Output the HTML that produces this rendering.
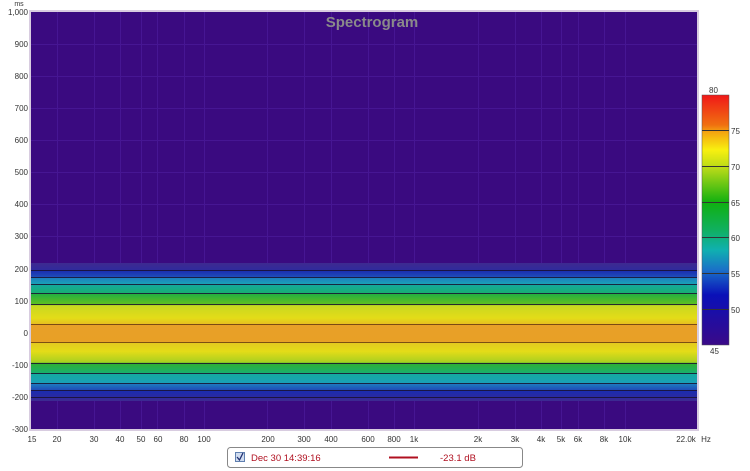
<!DOCTYPE html>
<html><head><meta charset="utf-8"><style>
html,body{margin:0;padding:0;background:#fff;width:750px;height:471px;overflow:hidden;font-family:"Liberation Sans","DejaVu Sans",sans-serif}
</style></head><body>
<svg width="750" height="471" xmlns="http://www.w3.org/2000/svg" style="position:absolute;left:0;top:0">
<defs>
<linearGradient id="band" x1="0" y1="263" x2="0" y2="401" gradientUnits="userSpaceOnUse">
<stop offset="0" stop-color="#3e2a90"/>
<stop offset="0.05" stop-color="#302a9c"/>
<stop offset="0.055" stop-color="#1a2cb0"/>
<stop offset="0.10" stop-color="#1f4cb8"/>
<stop offset="0.105" stop-color="#1e7cc0"/>
<stop offset="0.15" stop-color="#1aa0b8"/>
<stop offset="0.155" stop-color="#14a8a0"/>
<stop offset="0.22" stop-color="#18b070"/>
<stop offset="0.225" stop-color="#24b040"/>
<stop offset="0.30" stop-color="#60c020"/>
<stop offset="0.31" stop-color="#c8d820"/>
<stop offset="0.40" stop-color="#e4dc18"/>
<stop offset="0.44" stop-color="#e6c020"/>
<stop offset="0.445" stop-color="#e8a028"/>
<stop offset="0.57" stop-color="#e8a026"/>
<stop offset="0.575" stop-color="#e4c820"/>
<stop offset="0.64" stop-color="#e4dc18"/>
<stop offset="0.72" stop-color="#a8d020"/>
<stop offset="0.725" stop-color="#30b030"/>
<stop offset="0.80" stop-color="#18b070"/>
<stop offset="0.805" stop-color="#14aaa0"/>
<stop offset="0.87" stop-color="#1aa0b8"/>
<stop offset="0.875" stop-color="#1e7cc0"/>
<stop offset="0.92" stop-color="#1f4cb8"/>
<stop offset="0.925" stop-color="#1a2cb0"/>
<stop offset="0.97" stop-color="#2a2aa0"/>
<stop offset="1" stop-color="#3e2a90"/>
</linearGradient>
<linearGradient id="cb" x1="0" y1="95" x2="0" y2="345" gradientUnits="userSpaceOnUse">
<stop offset="0" stop-color="#f01818"/>
<stop offset="0.12" stop-color="#f07010"/>
<stop offset="0.145" stop-color="#f4a010"/>
<stop offset="0.22" stop-color="#f8f010"/>
<stop offset="0.30" stop-color="#b0d818"/>
<stop offset="0.43" stop-color="#10b010"/>
<stop offset="0.54" stop-color="#10b060"/>
<stop offset="0.62" stop-color="#10b0b0"/>
<stop offset="0.70" stop-color="#1a70c8"/>
<stop offset="0.80" stop-color="#0a10b8"/>
<stop offset="1" stop-color="#3a0a88"/>
</linearGradient>
</defs>
<rect x="29" y="10" width="670" height="421" fill="#d8cce0"/>
<rect x="31" y="12" width="666" height="417" fill="#3a0a80"/>
<g stroke="#4a1a98" stroke-width="1" opacity="0.8">
<line x1="31" x2="697" y1="44.5" y2="44.5"/><line x1="31" x2="697" y1="76.5" y2="76.5"/><line x1="31" x2="697" y1="108.5" y2="108.5"/><line x1="31" x2="697" y1="140.5" y2="140.5"/><line x1="31" x2="697" y1="172.5" y2="172.5"/><line x1="31" x2="697" y1="204.5" y2="204.5"/><line x1="31" x2="697" y1="236.5" y2="236.5"/><line x1="31" x2="697" y1="268.5" y2="268.5"/><line x1="31" x2="697" y1="397.5" y2="397.5"/>
<line y1="12" y2="429" x1="57.5" x2="57.5"/><line y1="12" y2="429" x1="94.5" x2="94.5"/><line y1="12" y2="429" x1="120.5" x2="120.5"/><line y1="12" y2="429" x1="141.5" x2="141.5"/><line y1="12" y2="429" x1="157.5" x2="157.5"/><line y1="12" y2="429" x1="184.5" x2="184.5"/><line y1="12" y2="429" x1="204.5" x2="204.5"/><line y1="12" y2="429" x1="267.5" x2="267.5"/><line y1="12" y2="429" x1="304.5" x2="304.5"/><line y1="12" y2="429" x1="331.5" x2="331.5"/><line y1="12" y2="429" x1="368.5" x2="368.5"/><line y1="12" y2="429" x1="394.5" x2="394.5"/><line y1="12" y2="429" x1="414.5" x2="414.5"/><line y1="12" y2="429" x1="478.5" x2="478.5"/><line y1="12" y2="429" x1="515.5" x2="515.5"/><line y1="12" y2="429" x1="541.5" x2="541.5"/><line y1="12" y2="429" x1="561.5" x2="561.5"/><line y1="12" y2="429" x1="578.5" x2="578.5"/><line y1="12" y2="429" x1="604.5" x2="604.5"/><line y1="12" y2="429" x1="625.5" x2="625.5"/>
</g>
<rect x="31" y="263" width="666" height="138" fill="url(#band)"/>
<g stroke="#1a1030" stroke-width="1" fill="none" opacity="0.85">
<line x1="31" x2="697" y1="270.5" y2="270.5"/><line x1="31" x2="697" y1="277.5" y2="277.5"/><line x1="31" x2="697" y1="284.5" y2="284.5"/><line x1="31" x2="697" y1="293.5" y2="293.5"/><line x1="31" x2="697" y1="304.5" y2="304.5"/><line x1="31" x2="697" y1="324.5" y2="324.5" stroke="#6a3a10"/><line x1="31" x2="697" y1="342.5" y2="342.5" stroke="#6a3a10"/><line x1="31" x2="697" y1="363.5" y2="363.5"/><line x1="31" x2="697" y1="373.5" y2="373.5"/><line x1="31" x2="697" y1="383.5" y2="383.5"/><line x1="31" x2="697" y1="390.5" y2="390.5"/><line x1="31" x2="697" y1="397.5" y2="397.5"/>
</g>
<text x="372" y="27" text-anchor="middle" font-size="15" font-weight="bold" fill="#8a8a8a">Spectrogram</text>
<g font-size="8" fill="#333" text-anchor="end">
<text x="19" y="6" text-anchor="middle" font-size="7">ms</text>
<text x="28" y="15">1,000</text><text x="28" y="47">900</text><text x="28" y="79">800</text><text x="28" y="111">700</text><text x="28" y="143">600</text><text x="28" y="175">500</text><text x="28" y="207">400</text><text x="28" y="239">300</text><text x="28" y="272">200</text><text x="28" y="304">100</text><text x="28" y="336">0</text><text x="28" y="368">-100</text><text x="28" y="400">-200</text><text x="28" y="432">-300</text>
</g>
<g font-size="8" fill="#333" text-anchor="middle">
<text x="32" y="442">15</text><text x="57" y="442">20</text><text x="94" y="442">30</text><text x="120" y="442">40</text><text x="141" y="442">50</text><text x="158" y="442">60</text><text x="184" y="442">80</text><text x="204" y="442">100</text><text x="268" y="442">200</text><text x="304" y="442">300</text><text x="331" y="442">400</text><text x="368" y="442">600</text><text x="394" y="442">800</text><text x="414" y="442">1k</text><text x="478" y="442">2k</text><text x="515" y="442">3k</text><text x="541" y="442">4k</text><text x="561" y="442">5k</text><text x="578" y="442">6k</text><text x="604" y="442">8k</text><text x="625" y="442">10k</text><text x="686" y="442">22.0k</text><text x="706" y="442">Hz</text>
</g>
<rect x="702" y="95" width="27" height="250" fill="url(#cb)" stroke="#555" stroke-width="0.5"/>
<g stroke="#333" stroke-width="1"><line x1="702" x2="729" y1="130.5" y2="130.5"/><line x1="702" x2="729" y1="166.5" y2="166.5"/><line x1="702" x2="729" y1="202.5" y2="202.5"/><line x1="702" x2="729" y1="237.5" y2="237.5"/><line x1="702" x2="729" y1="273.5" y2="273.5"/><line x1="702" x2="729" y1="309.5" y2="309.5"/></g>
<g font-size="8" fill="#333"><text x="709" y="93">80</text><text x="731" y="134">75</text><text x="731" y="170">70</text><text x="731" y="206">65</text><text x="731" y="241">60</text><text x="731" y="277">55</text><text x="731" y="313">50</text><text x="710" y="354">45</text></g>
<rect x="227.5" y="447.5" width="295" height="20" rx="3" fill="#fff" stroke="#888"/>
<rect x="235.5" y="452.5" width="9" height="9" fill="#d0dcf0" stroke="#6080b0"/>
<path d="M237 457 L239.5 460 L243 453" stroke="#203070" stroke-width="1.3" fill="none"/>
<text x="251" y="461" font-size="9.5" fill="#b01020">Dec 30 14:39:16</text>
<line x1="389" x2="418" y1="457.5" y2="457.5" stroke="#b01020" stroke-width="2"/>
<text x="440" y="461" font-size="9.5" fill="#b01020">-23.1 dB</text>
</svg>
</body></html>
